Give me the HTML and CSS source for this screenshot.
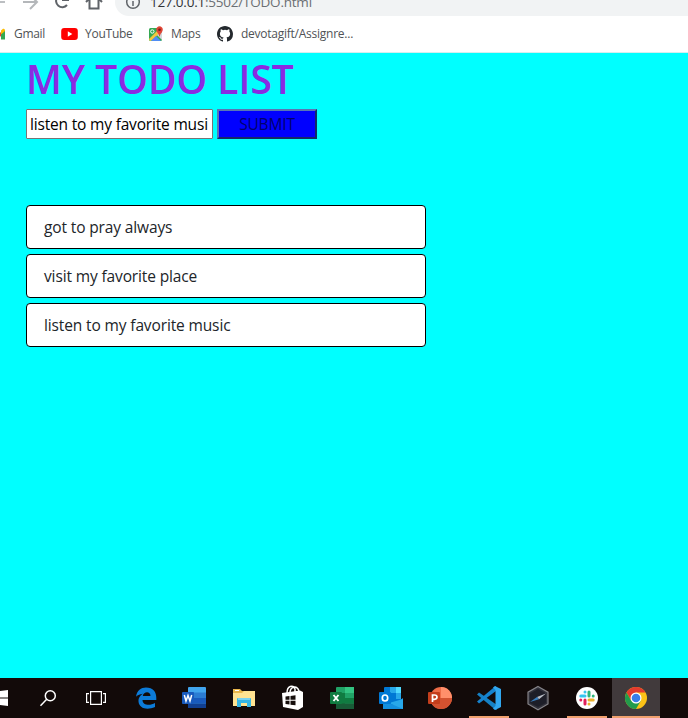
FILE: index.html
```html
<!DOCTYPE html>
<html lang="en">
<head>
<meta charset="utf-8">
<title>TODO</title>
<link rel="stylesheet" href="styles.css">
</head>
<body>
<header class="browser">
  <div class="toolbar">
    <svg class="nav-icons" width="115" height="16" viewBox="0 0 115 16" fill="none" stroke="#5f6368" stroke-width="2">
      <path d="M-8 2H5" stroke="#bcbfc2"/>
      <path d="M23 2H36M30-5L37 2L30 9" stroke="#b4b7ba"/>
      <path d="M67 5A6.2 6.2 0 1 1 66-4M68-6V0H62"/>
      <path d="M86 2L94-6L102 2M89.500 0V8.500H98.500V0"/>
    </svg>
    <div class="address">
      <svg width="16" height="16" viewBox="0 0 16 16" fill="none" stroke="#5f6368" stroke-width="1.5"><circle cx="8" cy="8" r="6.3"/><path d="M8 7V12M8 4V5.6"/></svg>
      <span class="url"><b>127.0.0.1</b>:5502/TODO.html</span>
    </div>
  </div>
  <nav class="bookmarks">
    <svg class="gmail" width="16" height="16" viewBox="0 0 16 16"><path fill="#4285f4" d="M0 4V14H4V8z"/><path fill="#ea4335" d="M0 3L8 9L15 4V8L8 13L0 7z"/><path fill="#34a853" d="M12 7L16 4V13.5H12z"/><path fill="#fbbc04" d="M12 4.5L14 2.8Q16 2 16 5L12 8.5z"/></svg>
    <span class="label gmail-label">Gmail</span>
    <svg class="youtube" width="17" height="16" viewBox="0 0 17 16"><rect x=".2" y="2" width="16.6" height="12" rx="3" fill="#f00"/><path d="M6.8 5.3L11.3 8L6.8 10.7z" fill="#fff"/></svg>
    <span class="label youtube-label">YouTube</span>
    <svg class="maps" width="16" height="16" viewBox="0 0 16 16"><rect x="1" y="2" width="13" height="13" rx="1.5" fill="#34a853"/><path d="M1 13L11 3L14 5L3 15Q1 15 1 13" fill="#f4c63d"/><path d="M3 15L8 10L13 15z" fill="#4f8df5"/><path d="M9 9L14 14V6z" fill="#d5d8dc"/><circle cx="4.3" cy="5.5" r="1.7" fill="none" stroke="#fff"/><path d="M11.5 11Q11 8 9 6Q7.500 3 9 1.500Q11.500-.8 14 1.500Q15.500 3 14 6Q12 8 11.500 11" fill="#e14435"/><circle cx="11.500" cy="3.800" r="1.300" fill="#7b1d17"/></svg>
    <span class="label maps-label">Maps</span>
    <svg class="github" width="16" height="16" viewBox="0 0 16 16"><path fill="#24292e" d="M8 0C3.580 0 0 3.580 0 8c0 3.540 2.290 6.530 5.470 7.590.4.070.55-.17.55-.38 0-.19-.01-.82-.01-1.490-2.010.37-2.530-.49-2.690-.94-.09-.23-.48-.94-.82-1.130-.28-.15-.68-.52-.01-.53.63-.01 1.080.58 1.230.82.72 1.210 1.870.87 2.330.66.07-.52.28-.87.51-1.070-1.780-.2-3.640-.89-3.640-3.950 0-.87.31-1.590.82-2.150-.08-.2-.36-1.020.08-2.120 0 0 .67-.21 2.200.82a7.600 7.600 0 0 1 4 0c1.530-1.040 2.200-.82 2.200-.82.44 1.100.16 1.920.08 2.120.51.56.82 1.270.82 2.150 0 3.070-1.870 3.750-3.650 3.950.29.25.54.73.54 1.480 0 1.070-.01 1.930-.01 2.200 0 .21.15.46.55.38A8 8 0 0 0 16 8c0-4.420-3.580-8-8-8z"/></svg>
    <span class="label github-label">devotagift/Assignre...</span>
  </nav>
</header>
<main class="page">
  <h1>MY TODO LIST</h1>
  <form class="entry">
    <div class="field"><span>listen to my favorite musi</span></div>
    <button type="button">SUBMIT</button>
  </form>
  <ul class="todos">
    <li>got to pray always</li>
    <li>visit my favorite place</li>
    <li>listen to my favorite music</li>
  </ul>
</main>
<footer class="taskbar">
  <div class="task"><svg width="48" height="40" viewBox="0 0 48 40"><path fill="#fff" d="M17 14L24 13V19.400H17zM25 12.900L33 12V19.400H25zM17 20.600H24V27L17 26zM25 20.600H33V28L25 27z"/></svg></div>
  <div class="task"><svg width="48" height="40" viewBox="0 0 48 40" fill="none" stroke="#fff" stroke-width="1.500"><circle cx="26.300" cy="17.700" r="5"/><path d="M22.700 21.300L16.500 27.700"/></svg></div>
  <div class="task"><svg width="48" height="40" viewBox="1 0 48 40" fill="none" stroke="#fff" stroke-width="1.200"><path d="M18.600 13.600H29.400V26.400H18.600zM17 15.600H14.600V24.400H17M31 15.600H33.400V24.400H31"/></svg></div>
  <div class="task"><svg width="48" height="40" viewBox="-1 0 48 40"><path fill="#0c7bd8" d="M13 18.800C14 12 18 9.400 23 9.400C30 9.400 33.500 14 33.300 20V22H19.500C19.700 27.500 27 28 32 25V29C24 32.500 16 30.500 15.500 23.500C15.300 19.500 17.500 17 20 15.700C16.500 16 14 17.500 13 18.800M19.800 18H27.500C27.500 12.800 20.500 13.300 19.800 18"/></svg></div>
  <div class="task"><svg width="48" height="40" viewBox="0 0 48 40"><rect x="17" y="9" width="18" height="21" rx="1" fill="#41a5ee"/><path fill="#2b7cd3" d="M17 14.500H35V20H17z"/><path fill="#185abd" d="M17 20H35V25.500H17z"/><path fill="#103f91" d="M17 25.500H35V30H17z"/><rect x="11" y="14" width="12" height="12" rx="1" fill="#185abd"/><path fill="none" stroke="#fff" stroke-width="1.500" d="M13.300 17L15 23L17 17.500L19 23L20.700 17"/></svg></div>
  <div class="task"><svg width="48" height="40" viewBox="0 0 48 40"><path fill="#e9b64b" d="M13 11H20L22 13H34V28H13z"/><path fill="#ffe391" d="M13 15H22L24 13H35V28H13z"/><path fill="#fff" d="M15 12H19V13H15z"/><path fill="#35b6e5" d="M17 21Q17 20 18 20H30Q31 20 31 21V29H27V25H21V29H17z"/><path fill="#79d2ef" d="M18 20H30V22H18z"/></svg></div>
  <div class="task"><svg width="48" height="40" viewBox="0 0 48 40"><path fill="none" stroke="#fff" stroke-width="1.500" d="M18 15C18 8 24 6 26 11V14M21 14C22 8 28 7 30 13"/><path fill="#fff" d="M13 15L31 12.500L34 14V29L29 32L14 29z"/><path fill="#150d0b" d="M16.500 18.500L20.500 18V21.700H16.500zM21.500 17.900L26.500 17.300V21.700H21.500zM16.500 22.700H20.500V26.500L16.500 26zM21.500 22.700H26.500V27.300L21.500 26.700z"/></svg></div>
  <div class="task"><svg width="48" height="40" viewBox="0 0 48 40"><rect x="18" y="9" width="18" height="22" rx="1" fill="#21a366"/><path fill="#33c481" d="M27 9H36V15H27z"/><path fill="#107c41" d="M18 15H27V26H18zM27 20H36V25.500H27z"/><path fill="#185c37" d="M18 25.500H36V31H18z"/><rect x="12" y="14" width="12" height="12" rx="1" fill="#107c41"/><path stroke="#fff" stroke-width="1.900" d="M15.500 17L20.500 23M20.500 17L15.500 23"/></svg></div>
  <div class="task"><svg width="48" height="40" viewBox="0 0 48 40"><rect x="17" y="9" width="17" height="18" rx="1" fill="#0078d4"/><path fill="#28a8ea" d="M23 9H29V15H23zM29 15H34V21H29z"/><path fill="#50d9ff" d="M29 9H34V15H29z"/><path fill="#1490df" d="M16 22L26 27L36 20V31H16z"/><path fill="#28a8ea" d="M36 21V31L22 25z"/><rect x="12" y="14" width="12" height="12" rx="1" fill="#0078d4"/><ellipse cx="18" cy="20" rx="2.700" ry="3" fill="none" stroke="#fff" stroke-width="1.700"/></svg></div>
  <div class="task"><svg width="48" height="40" viewBox="0 0 48 40"><circle cx="25" cy="20" r="11" fill="#ed6c47"/><path fill="#ff8f6b" d="M25 9A11 11 0 0 1 36 20H25z"/><path fill="#d35230" d="M14 20H36A11 11 0 0 1 14 20z"/><rect x="12" y="14" width="12" height="12" rx="1" fill="#c43e1c"/><path fill="none" stroke="#fff" stroke-width="1.700" d="M16.500 24V17H18.500Q21 17 21 19.100Q21 21.300 18.500 21.300H16.500"/></svg></div>
  <div class="task open"><svg width="48" height="40" viewBox="0 0 48 40"><path fill="#1681c4" d="M12 16.500L14 14.500L32 27V31.500H30z"/><path fill="#1683ce" d="M12 23.500L14 25.500L31 13V8.500H30z"/><path fill="#31a7ef" d="M30 8L36 11V29L30 32L28 30.500L30.500 28V12L28 9.500z"/></svg></div>
  <div class="task"><svg width="48" height="40" viewBox="0 0 48 40"><path fill="#303039" stroke="#858489" stroke-width="1.200" d="M24 8.500L34 14.200V26L24 31.800L14 26V14.200z"/><path fill="#1d1e28" d="M24 11L32 15.500V25L24 29L16 25V15.500z"/><path fill="#b9bec6" d="M32 15.500L25 21.300L23 19z"/><path fill="#397fc0" d="M16 24L23 19L25 21.300z"/></svg></div>
  <div class="task open"><svg width="48" height="40" viewBox="0 0 48 40"><circle cx="24" cy="20" r="11" fill="#fff"/><g fill="none" stroke-width="3" stroke-linecap="round"><path stroke="#36c5f0" d="M22 14V14.100M17.800 18H22"/><path stroke="#2eb67d" d="M26 14V18M30.200 18V18.100"/><path stroke="#ecb22e" d="M26 22H30.200M26 26V26.100"/><path stroke="#e01e5a" d="M22 22V26M17.800 22V22.100"/></g></svg></div>
  <div class="task active"><svg width="48" height="40" viewBox="0 0 48 40"><circle cx="24" cy="20" r="11" fill="#fbc116"/><path fill="#e33b2e" d="M14.470 14.500A11 11 0 0 1 33.530 14.500H24L19.200 22.700z"/><path fill="#229b4c" d="M14.470 14.500A11 11 0 0 0 24 31L28.800 22.700L24 25.500L19.200 22.700z"/><circle cx="24" cy="20" r="5.500" fill="#fff"/><circle cx="24" cy="20" r="4.300" fill="#397ee8"/></svg></div>
</footer>
</body>
</html>
```
FILE: styles.css
```css
* { box-sizing: border-box; }
body {
  margin: 0;
  width: 688px;
  height: 718px;
  display: flex;
  flex-direction: column;
  overflow: hidden;
  background: aqua;
  color: #212529;
  font-family: "Open Sans", "Noto Sans", sans-serif;
}
svg { display: block; flex: none; }
.browser { height: 53px; background: #fff; border-bottom: 1px solid #d5eeee; }
.toolbar { height: 16px; display: flex; align-items: flex-end; overflow: hidden; }
.address {
  flex: 1;
  height: 28px;
  display: flex;
  align-items: center;
  gap: 9px;
  padding-left: 10px;
  background: #f1f3f4;
  border-radius: 14px 0 0 14px;
}
.url { font-size: 13.5px; line-height: 20px; color: #6b6f73; white-space: nowrap; letter-spacing: -.22px; }
.url b { font-weight: 400; color: #303236; }
.bookmarks { height: 36px; display: flex; align-items: center; }
.label { font-size: 12px; line-height: 16px; color: #505356; white-space: nowrap; }
.gmail { margin-left: -11px; }
.gmail-label { width: 47px; margin-left: 9px; letter-spacing: -.3px; }
.youtube-label { width: 63px; margin-left: 7px; letter-spacing: -.25px; }
.maps-label { width: 46px; margin-left: 7px; letter-spacing: -.3px; }
.github-label { margin-left: 8px; letter-spacing: -.25px; }
.page { flex: 1; padding: 2px 26px 0; }
h1 { margin: 0 0 6px; font-size: 39px; line-height: 48px; font-weight: 550; color: blueviolet; letter-spacing: 0; white-space: nowrap; }
.entry { display: flex; gap: 4px; margin: 0 0 66px; }
.field {
  width: 187px;
  height: 30px;
  padding: 1px 3px;
  background: #fff;
  border: 1px solid #767676;
  border-radius: 1px;
  font-size: 15.5px;
  line-height: 27px;
  color: #000;
  letter-spacing: -.18px;
  white-space: nowrap;
  overflow: hidden;
}
button {
  width: 100px;
  height: 30px;
  padding: 0;
  background: blue;
  border: 2px solid;
  border-color: #5876b5 #142a68 #142a68 #5876b5;
  color: #00006e;
  font: 15.5px/26px "Open Sans", sans-serif;
  letter-spacing: -.15px;
}
.todos { width: 400px; margin: 0; padding: 0; list-style: none; display: grid; gap: 5px; }
.todos li {
  height: 44px;
  padding: 0 17px;
  background: #fff;
  border: 1px solid #000;
  border-radius: 4px;
  font-size: 15.5px;
  line-height: 43px;
  letter-spacing: -.13px;
}
.taskbar { height: 40px; display: flex; gap: 1px; margin-left: -25px; width: 713px; background: #120a09; }
.task { flex: 0 0 48px; height: 40px; }
.open { background: linear-gradient(#f0a06e, #f0a06e) center bottom / 40px 2px no-repeat; }
.active { background: #413a3c; border-bottom: 2px solid #f0a06e; overflow: hidden; }
```
